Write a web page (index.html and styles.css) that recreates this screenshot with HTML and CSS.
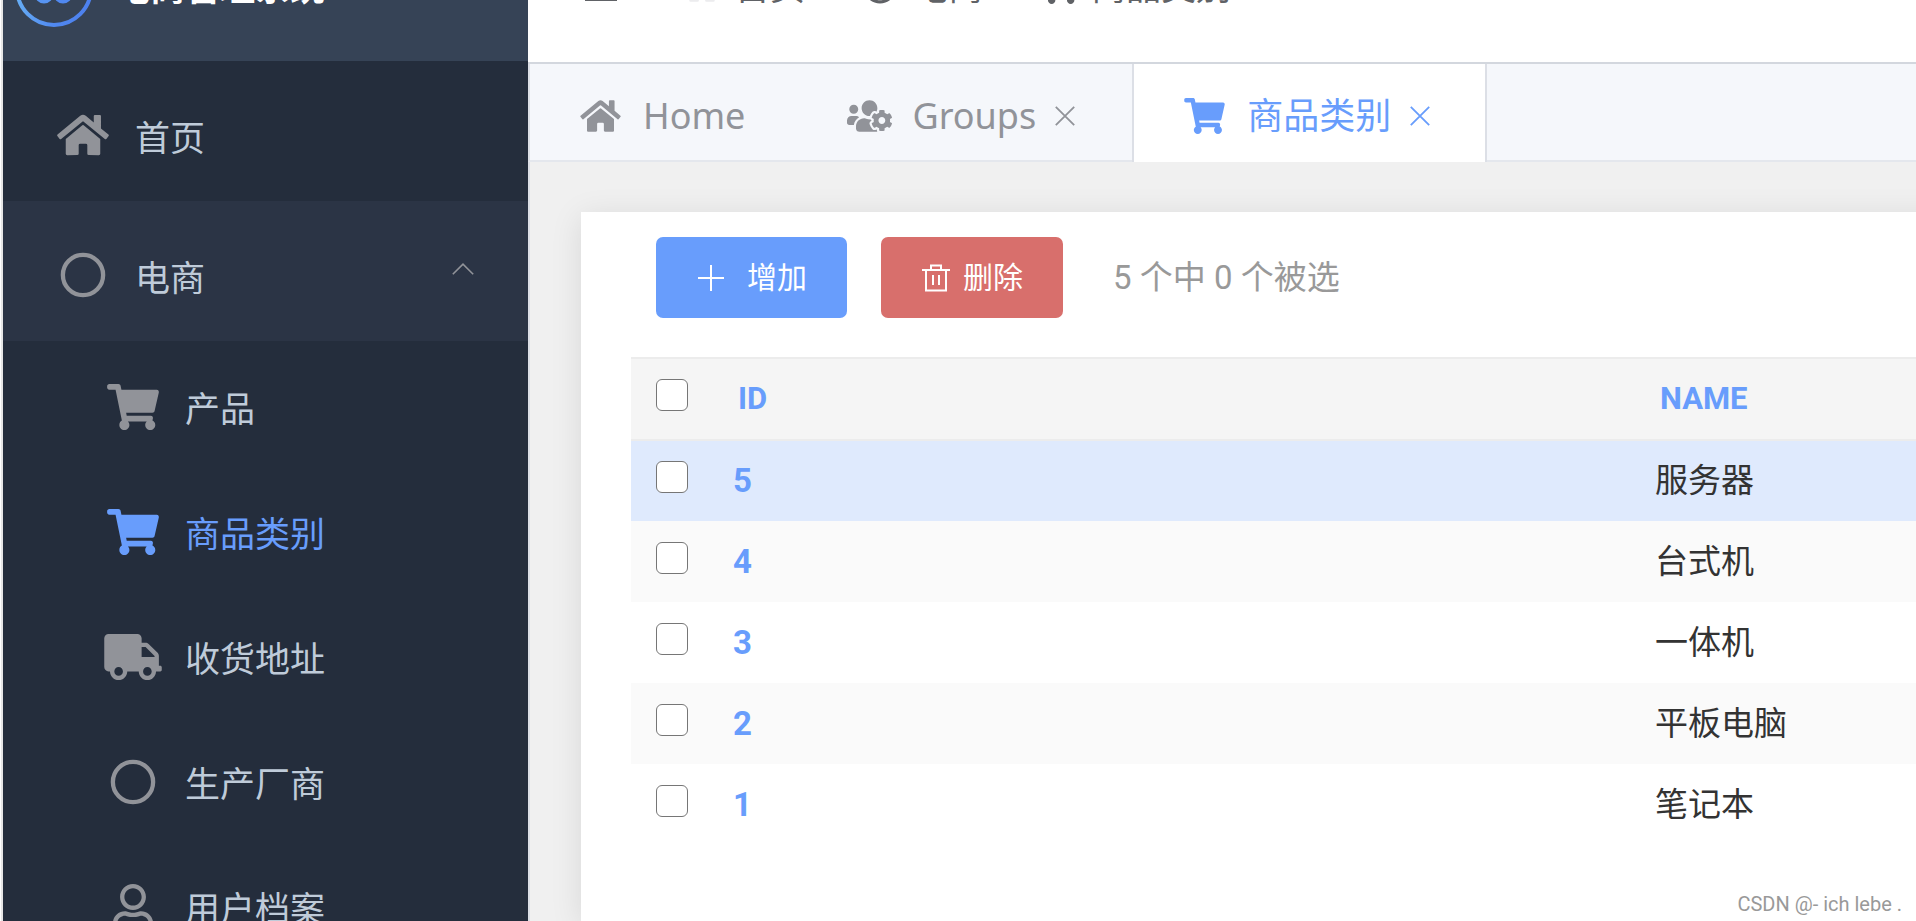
FILE: index.html
```html
<!DOCTYPE html>
<html lang="zh-CN">
<head>
<meta charset="utf-8">
<title>电商管理系统</title>
<link rel="stylesheet" href="styles.css">
</head>
<body>
<svg class="sprite" aria-hidden="true">
  <symbol id="home" viewBox="0 0 576 512"><path d="M280.37 148.26L96 300.11V464a16 16 0 0 0 16 16l112.06-.29a16 16 0 0 0 15.92-16V368a16 16 0 0 1 16-16h64a16 16 0 0 1 16 16v95.64a16 16 0 0 0 16 16.05L464 480a16 16 0 0 0 16-16V300L295.67 148.26a12.19 12.19 0 0 0-15.3 0zM571.6 251.47L488 182.56V44.05a12 12 0 0 0-12-12h-56a12 12 0 0 0-12 12v72.61L318.47 43a48 48 0 0 0-61 0L4.34 251.47a12 12 0 0 0-1.6 16.9l25.5 31A12 12 0 0 0 45.15 301l235.22-193.74a12.19 12.19 0 0 1 15.3 0L530.9 301a12 12 0 0 0 16.9-1.6l25.5-31a12 12 0 0 0-1.7-16.93z"/></symbol>
  <symbol id="cart" viewBox="0 0 576 512"><path d="M528.12 301.319l47.273-208C578.806 78.301 567.391 64 551.99 64H159.208l-9.166-44.81C147.758 8.021 137.93 0 126.529 0H24C10.745 0 0 10.745 0 24v16c0 13.255 10.745 24 24 24h69.883l70.248 343.435C147.325 417.1 136 435.222 136 456c0 30.928 25.072 56 56 56s56-25.072 56-56c0-15.674-6.447-29.835-16.824-40h209.647C430.447 426.165 424 440.326 424 456c0 30.928 25.072 56 56 56s56-25.072 56-56c0-22.172-12.888-41.332-31.579-50.405l5.517-24.276c3.413-15.018-8.002-29.319-23.403-29.319H218.117l-6.545-32h293.145c11.206 0 20.92-7.754 23.403-18.681z"/></symbol>
  <symbol id="truck" viewBox="0 0 640 512"><path d="M624 352h-16V243.9c0-12.7-5.1-24.9-14.1-33.9L494 110.1c-9-9-21.2-14.1-33.9-14.1H416V48c0-26.5-21.5-48-48-48H48C21.5 0 0 21.5 0 48v320c0 26.5 21.5 48 48 48h16c0 53 43 96 96 96s96-43 96-96h128c0 53 43 96 96 96s96-43 96-96h48c8.8 0 16-7.2 16-16v-32c0-8.8-7.2-16-16-16zM160 464c-26.5 0-48-21.5-48-48s21.5-48 48-48 48 21.5 48 48-21.5 48-48 48zm320 0c-26.5 0-48-21.5-48-48s21.5-48 48-48 48 21.5 48 48-21.5 48-48 48zm80-208H416V144h44.1l99.9 99.9V256z"/></symbol>
  <symbol id="ring" viewBox="0 0 512 512"><circle cx="256" cy="256" r="224" fill="none" stroke="currentColor" stroke-width="48"/></symbol>
  <symbol id="user" viewBox="0 0 448 512"><path d="M313.6 304c-28.7 0-42.5 16-89.6 16-47.1 0-60.8-16-89.6-16C60.2 304 0 364.2 0 438.4V464c0 26.5 21.5 48 48 48h352c26.5 0 48-21.5 48-48v-25.6c0-74.2-60.2-134.4-134.4-134.4zM400 464H48v-25.6c0-47.6 38.8-86.4 86.4-86.4 14.6 0 38.3 16 89.6 16 51.7 0 74.9-16 89.6-16 47.6 0 86.4 38.8 86.4 86.4V464zM224 288c79.5 0 144-64.5 144-144S303.5 0 224 0 80 64.5 80 144s64.5 144 144 144zm0-240c52.9 0 96 43.1 96 96s-43.1 96-96 96-96-43.1-96-96 43.1-96 96-96z"/></symbol>
  <symbol id="users-cog" viewBox="0 0 640 512"><path d="M610.5 341.3c2.6-14.1 2.6-28.5 0-42.6l25.8-14.9c3-1.7 4.3-5.2 3.3-8.5-6.7-21.6-18.2-41.2-33.2-57.4-2.3-2.5-6-3.1-9-1.4l-25.8 14.9c-10.9-9.3-23.4-16.5-36.9-21.3v-29.8c0-3.4-2.4-6.4-5.7-7.1-22.3-5-45-4.8-66.2 0-3.3.7-5.7 3.7-5.7 7.1v29.8c-13.5 4.8-26 12-36.9 21.3l-25.8-14.9c-2.9-1.7-6.7-1.1-9 1.4-15 16.2-26.5 35.8-33.2 57.4-1 3.3.4 6.8 3.3 8.5l25.8 14.9c-2.6 14.1-2.6 28.5 0 42.6l-25.8 14.9c-3 1.7-4.3 5.2-3.3 8.5 6.7 21.6 18.2 41.1 33.2 57.4 2.3 2.5 6 3.1 9 1.4l25.8-14.9c10.9 9.3 23.4 16.5 36.9 21.3v29.8c0 3.4 2.4 6.4 5.7 7.1 22.3 5 45 4.8 66.2 0 3.3-.7 5.7-3.7 5.7-7.1v-29.8c13.5-4.8 26-12 36.9-21.3l25.8 14.9c2.9 1.7 6.7 1.1 9-1.4 15-16.2 26.5-35.8 33.2-57.4 1-3.3-.4-6.8-3.3-8.5l-25.8-14.9zM496 368.5c-26.8 0-48.5-21.8-48.5-48.5s21.8-48.5 48.5-48.5 48.5 21.8 48.5 48.5-21.7 48.5-48.5 48.5zM96 224c35.3 0 64-28.7 64-64s-28.7-64-64-64-64 28.7-64 64 28.7 64 64 64zm224 32c1.9 0 3.7-.5 5.6-.6 8.3-21.7 20.5-42.1 36.3-59.2 7.4-8 17.9-12.6 28.9-12.6 6.9 0 13.7 1.8 19.6 5.3l7.9 4.6c.8-.5 1.6-.9 2.4-1.4 7-14.6 11.2-30.8 11.2-48 0-61.9-50.1-112-112-112S208 82.1 208 144c0 61.9 50.1 112 112 112zm105.2 194.5c-2.3-1.2-4.6-2.6-6.8-3.9-8.2 4.8-15.3 9.8-27.5 9.8-10.9 0-21.4-4.6-28.9-12.6-18.3-19.8-32.3-43.9-40.2-69.6-10.7-34.5 24.9-49.7 25.8-50.3-.1-2.6-.1-5.2 0-7.8l-7.9-4.6c-3.8-2.2-7-5-9.8-8.1-3.3.2-6.5.6-9.8.6-24.6 0-47.6-6-68.5-16h-8.3C179.6 288 128 339.6 128 403.2V432c0 26.5 21.5 48 48 48h255.4c-3.7-6-6.2-12.8-6.2-20.3v-9.2zM173.1 274.6C161.5 263.1 145.6 256 128 256H64c-35.3 0-64 28.7-64 64v32c0 17.7 14.3 32 32 32h65.9c6.3-47.4 34.9-87.3 75.2-109.4z"/></symbol>
  <symbol id="close" viewBox="0 0 20 20"><path d="M0.8 0.8L19.2 19.2M19.2 0.8L0.8 19.2" fill="none" stroke="currentColor" stroke-width="1.8"/></symbol>
</svg>

<div class="shell">
  <aside class="sidebar">
    <div class="brand">
      <svg class="brand-logo" viewBox="0 0 78 78" aria-hidden="true">
        <defs><linearGradient id="ringFill" x1="0" x2="1" y1="0" y2="0"><stop offset="0" stop-color="#66adf5"/><stop offset="0.5" stop-color="#5088f0"/><stop offset="1" stop-color="#4d80ee"/></linearGradient></defs>
        <circle cx="39" cy="39" r="37" fill="none" stroke="url(#ringFill)" stroke-width="4"/>
        <circle cx="29" cy="45" r="7" fill="none" stroke="#5794f2" stroke-width="5"/>
        <circle cx="48" cy="45" r="7" fill="none" stroke="#5088f0" stroke-width="5"/>
      </svg>
      <span class="brand-name">电商管理系统</span>
    </div>
    <nav class="menu">
      <a class="item" href="#home"><svg class="icon"><use href="#home"/></svg><span>首页</span></a>
      <button class="item item-open" type="button" aria-expanded="true"><svg class="icon"><use href="#ring"/></svg><span>电商</span><svg class="chevron" viewBox="0 0 22 12"><path d="M0.8 11.2L11 1.2L21.2 11.2" fill="none" stroke="currentColor" stroke-width="1.6"/></svg></button>
      <a class="item sub" href="#product"><svg class="icon"><use href="#cart"/></svg><span>产品</span></a>
      <a class="item sub current" href="#category"><svg class="icon"><use href="#cart"/></svg><span>商品类别</span></a>
      <a class="item sub" href="#address"><svg class="icon"><use href="#truck"/></svg><span>收货地址</span></a>
      <a class="item sub" href="#vendor"><svg class="icon"><use href="#ring"/></svg><span>生产厂商</span></a>
      <a class="item sub" href="#profile"><svg class="icon"><use href="#user"/></svg><span>用户档案</span></a>
    </nav>
  </aside>

  <div class="main">
    <header class="topbar">
      <button class="burger" type="button" aria-label="折叠菜单"><svg viewBox="0 0 32 28"><path d="M0 2H32M0 14H32M0 26H32" stroke="currentColor" stroke-width="4"/></svg></button>
      <nav class="crumbs">
        <a class="crumb" href="#home"><svg class="crumb-icon faint"><use href="#home"/></svg><span>首页</span></a>
        <span class="slash">/</span>
        <a class="crumb" href="#shop"><svg class="crumb-icon"><use href="#ring"/></svg><span>电商</span></a>
        <span class="slash">/</span>
        <a class="crumb" href="#category"><svg class="crumb-icon"><use href="#cart"/></svg><span>商品类别</span></a>
      </nav>
    </header>

    <div class="tabs">
      <a class="tab tab-fixed" href="#home"><svg class="tab-icon"><use href="#home"/></svg><span>Home</span></a>
      <div class="tab"><svg class="tab-icon"><use href="#users-cog"/></svg><a href="#groups">Groups</a><button class="tab-close" type="button" aria-label="关闭 Groups"><svg><use href="#close"/></svg></button></div>
      <div class="tab tab-current"><svg class="tab-icon"><use href="#cart"/></svg><a href="#category">商品类别</a><button class="tab-close" type="button" aria-label="关闭 商品类别"><svg><use href="#close"/></svg></button></div>
    </div>

    <main class="content">
      <section class="card">
        <div class="toolbar">
          <button class="btn btn-add" type="button"><svg viewBox="0 0 26 26"><path d="M13 0V26M0 13H26" stroke="currentColor" stroke-width="2"/></svg><span>增加</span></button>
          <button class="btn btn-del" type="button"><svg viewBox="0 0 28 28"><path d="M0 6H28M9 6V1.5H19V6M4 6V26.5H24V6M11 11V21M17 11V21" fill="none" stroke="currentColor" stroke-width="2"/></svg><span>删除</span></button>
          <span class="count">5 个中 0 个被选</span>
        </div>
        <table class="grid">
          <colgroup><col class="col-check"><col><col class="col-name"></colgroup>
          <thead>
            <tr><th><input type="checkbox" aria-label="全选"></th><th>ID</th><th>NAME</th></tr>
          </thead>
          <tbody>
            <tr class="hover"><td><input type="checkbox" aria-label="选择 5"></td><td class="id">5</td><td>服务器</td></tr>
            <tr><td><input type="checkbox" aria-label="选择 4"></td><td class="id">4</td><td>台式机</td></tr>
            <tr><td><input type="checkbox" aria-label="选择 3"></td><td class="id">3</td><td>一体机</td></tr>
            <tr><td><input type="checkbox" aria-label="选择 2"></td><td class="id">2</td><td>平板电脑</td></tr>
            <tr><td><input type="checkbox" aria-label="选择 1"></td><td class="id">1</td><td>笔记本</td></tr>
          </tbody>
        </table>
      </section>
    </main>
  </div>
</div>
<div class="watermark">CSDN @- ich lebe .</div>
</body>
</html>
```
FILE: styles.css
```css
* { box-sizing: border-box; }
html { height: 100%; overflow: hidden; }
body {
  margin: 0;
  height: 100%;
  overflow: hidden;
  background: #fff;
  font-family: "Noto Sans", "Noto Sans CJK SC", sans-serif;
  font-size: 35px;
  line-height: 48px;
}
a { color: inherit; text-decoration: none; }
button { margin: 0; padding: 0; border: 0; background: none; color: inherit; font: inherit; }
svg { display: block; flex: none; fill: currentColor; }
.sprite { position: absolute; width: 0; height: 0; }

/* The page is scrolled down by half of the header. */
.shell {
  display: grid;
  grid-template-columns: 525px minmax(0, 1fr);
  height: calc(100vh + 64px);
  margin-top: -64px;
  margin-left: 1px;
  border-left: 2px solid #e6e6e6;
}

.sidebar { overflow: hidden; background: #242d3c; color: #bfcbd9; }
.brand {
  display: flex;
  align-items: center;
  gap: 22px;
  height: 125px;
  padding: 0 12px 22px;
  background: #364356;
}
.brand-logo { width: 78px; height: 78px; }
.brand-name { color: #fff; font-size: 35px; font-weight: 700; }

.menu { display: flex; flex-direction: column; }
.item {
  display: flex;
  align-items: center;
  gap: 22px;
  width: 100%;
  height: 140px;
  flex: none;
  padding: 8px 54px 0 50px;
  text-align: left;
}
.item span { padding-top: 5px; }
.item-open { background: #2b3445; }
.sub { height: 125px; padding-top: 6px; padding-left: 100px; }
.current { color: #689dfc; }
.icon { width: 60px; height: 46px; color: #919399; }
.current .icon { color: #689dfc; }
.chevron { width: 22px; height: 12px; margin: 0 0 12px auto; color: #919399; }

.main {
  display: flex;
  flex-direction: column;
  min-width: 0;
}
.topbar {
  display: flex;
  align-items: center;
  gap: 66px;
  flex: none;
  height: 128px;
  padding: 0 54px 24px 57px;
  border-bottom: 2px solid #d3d7de;
  background: #fff;
  color: #606266;
}
.burger svg { width: 32px; height: 28px; }
.crumbs { display: flex; align-items: center; }
.crumb { display: flex; align-items: center; gap: 14px; }
.crumb-icon { width: 38px; height: 34px; }
.faint { color: #ececee; }
.slash { width: 56px; padding-left: 16px; color: #c0c4cc; }

.tabs {
  display: flex;
  flex: none;
  height: 98px;
  border-bottom: 2px solid #e4e7ed;
  border-left: 2px solid #dcdfe6;
  background: #f5f7fb;
  color: #919399;
  font-size: 36px;
}
.tab {
  display: flex;
  align-items: center;
  height: 98px;
  padding: 6px 48px 0 48px;
  border: solid transparent;
  border-width: 0 2px 0 0;
}
.tab-fixed { padding-right: 52px; }
.tab-icon { width: 45px; height: 36px; margin-right: 20px; }
.tab-close { width: 35px; margin-left: 11px; }
.tab-close svg { width: 20px; height: 20px; margin: 0 auto; }
.tab-current {
  border-color: #dcdfe6;
  border-left-width: 2px;
  background: #fff;
  color: #689dfc;
}

.content {
  flex: 1;
  min-height: 0;
  padding: 50px 0 0 51px;
  border-left: 2px solid #dcdfe6;
  background: #f0f0f0;
  overflow: hidden;
}
.card {
  height: 100%;
  margin-right: -40px;
  padding: 25px 40px 0 50px;
  background: #fff;
  box-shadow: 0 5px 30px rgba(0, 0, 0, 0.1);
  font-family: Roboto, "Noto Sans CJK SC", sans-serif;
  font-size: 33px;
}
.toolbar { display: flex; align-items: center; gap: 34px; padding: 0 25px 39px; }
.btn {
  display: flex;
  align-items: center;
  height: 81px;
  padding: 0 40px 0 42px;
  border-radius: 7px;
  color: #fff;
  font-size: 30px;
}
.btn-add { gap: 23px; background: #689dfc; }
.btn-add svg { width: 26px; height: 26px; }
.btn-del { gap: 13px; padding-left: 41px; background: #d86f6c; }
.btn-del svg { width: 28px; height: 28px; }
.count { margin-left: 16px; color: #999; }

.grid { width: 100%; table-layout: fixed; border-collapse: collapse; color: #333; }
.col-check { width: 77px; }
.col-name { width: 286px; }
.grid th, .grid td { height: 81px; padding: 0 0 0 25px; text-align: left; vertical-align: middle; }
.grid thead tr { border: solid #ececec; border-width: 2px 0; background: #f5f5f5; }
.grid th { height: 82px; padding-left: 30px; color: #689dfc; font-size: 31px; font-weight: 700; }
.grid th:first-child { padding-left: 25px; }
.grid tbody tr:nth-child(even) { background: #fafafa; }
.grid tbody .hover { background: #dfeafd; }
.grid .id { color: #689dfc; font-weight: 700; }
.grid input {
  appearance: none;
  display: block;
  width: 32px;
  height: 32px;
  margin: 0 0 8px;
  border: 1px solid #767676;
  border-radius: 6px;
  background: #fff;
}

.watermark {
  position: absolute;
  right: 14px;
  bottom: 5px;
  color: #999;
  font-family: Roboto, sans-serif;
  font-size: 20px;
  line-height: 24px;
}
```
